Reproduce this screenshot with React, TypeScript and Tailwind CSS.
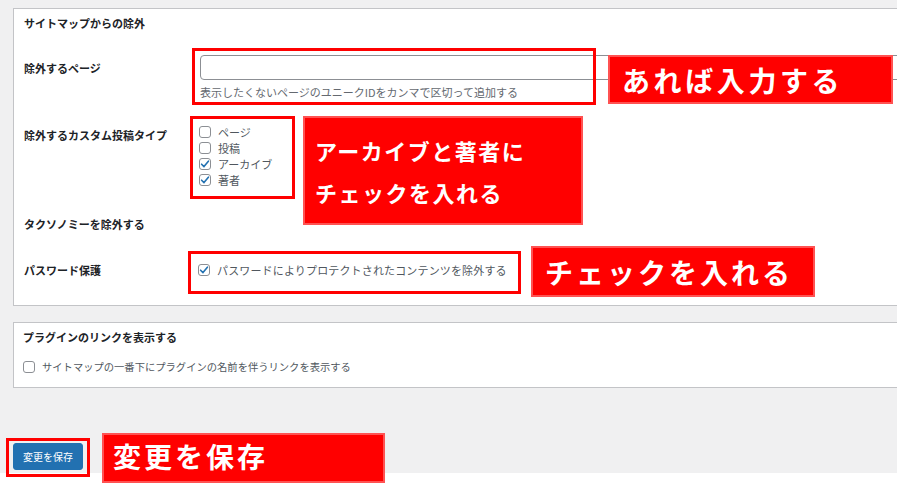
import React from "react";

function Box({ checked = false }: { checked?: boolean }) {
  return (
    <span className="w-[12px] h-[12px] shrink-0 border border-[#8c8f94] rounded-[3px] bg-white flex items-center justify-center">
      {checked && (
        <svg width="10" height="10" viewBox="0 0 10 10">
          <path d="M1.6 5.2 L4 7.6 L8.4 2.2" fill="none" stroke="#2271b1" strokeWidth="1.6" strokeLinecap="round" strokeLinejoin="round" />
        </svg>
      )}
    </span>
  );
}

function Check({ label, checked = false, cls = "text-[11px]" }: { label: string; checked?: boolean; cls?: string }) {
  return (
    <label className="flex items-center h-[16px] gap-[7px]">
      <Box checked={checked} />
      <span className={`leading-[16px] text-[#50575e] whitespace-nowrap ${cls}`}>{label}</span>
    </label>
  );
}

export default function App() {
  return (
    <div className="w-[897px] h-[488px] relative overflow-hidden bg-white font-['Noto_Sans_CJK_JP',sans-serif] text-[#1d2327]">
      <div className="h-[473px] bg-[#f0f0f1] pt-[8px] pl-[13px] flex flex-col">
        {/* Panel 1 */}
        <section className="h-[298px] w-[900px] bg-white border border-r-0 border-[#c3c4c7] flex flex-col pl-[10px]">
          <div className="h-[29px] flex items-center text-[11px] font-bold">サイトマップからの除外</div>
          {/* row 1 */}
          <div className="grid grid-cols-[175px_1fr]">
            <div className="pt-[22px] text-[11px] leading-[16px] font-bold">除外するページ</div>
            <div className="pt-[17px] pl-[1px]">
              <div className="h-[25px] w-[800px] border border-[#8c8f94] rounded-[4px] bg-white" />
              <div className="mt-[4px] text-[11px] leading-[16px] text-[#646970] whitespace-nowrap">
                表示したくないページのユニークIDをカンマで区切って追加する
              </div>
            </div>
          </div>
          {/* row 2 */}
          <div className="grid grid-cols-[175px_1fr]">
            <div className="pt-[27px] text-[11px] leading-[16px] font-bold">除外するカスタム投稿タイプ</div>
            <div className="pt-[24px] flex flex-col">
              <Check label="ページ" />
              <Check label="投稿" />
              <Check label="アーカイブ" checked />
              <Check label="著者" checked />
            </div>
          </div>
          {/* row 3 */}
          <div className="mt-[28px] text-[11px] leading-[16px] font-bold">タクソノミーを除外する</div>
          {/* row 4 */}
          <div className="mt-[30px] grid grid-cols-[174px_1fr] items-center">
            <div className="text-[11px] leading-[16px] font-bold">パスワード保護</div>
            <Check label="パスワードによりプロテクトされたコンテンツを除外する" checked cls="text-[11px] tracking-[0.15px]" />
          </div>
        </section>

        {/* Panel 2 */}
        <section className="mt-[16px] h-[66px] w-[900px] bg-white border border-r-0 border-[#c3c4c7] flex flex-col pl-[9px]">
          <div className="h-[29px] flex items-center text-[11px] font-bold">プラグインのリンクを表示する</div>
          <div className="mt-[7px]">
            <Check label="サイトマップの一番下にプラグインの名前を伴うリンクを表示する" cls="text-[10.3px]" />
          </div>
        </section>

        <div className="mt-[55px]">
          <button className="h-[27px] w-[70px] rounded-[3px] bg-[#2271b1] border border-[#2271b1] text-white text-[10px] leading-none flex items-center justify-center">
            変更を保存
          </button>
        </div>
      </div>

      {/* Annotation outlines */}
      <div className="absolute left-[192px] top-[48px] w-[404px] h-[57px] border-[3px] border-[#ff0000]" />
      <div className="absolute left-[190px] top-[116px] w-[105px] h-[83px] border-[3px] border-[#ff0000]" />
      <div className="absolute left-[188px] top-[251px] w-[333px] h-[43px] border-[3px] border-[#ff0000]" />
      <div className="absolute left-[6px] top-[438px] w-[84px] h-[39px] border-[3px] border-[#ff0000]" />

      {/* Callouts */}
      <div className="absolute left-[608px] top-[55px] w-[285px] h-[49px] bg-[#ff0000] border-2 border-[#ff5252] flex items-center pl-[12px] text-white font-bold text-[28px] tracking-[3.6px] leading-none whitespace-nowrap">
        あれば入力する
      </div>
      <div className="absolute left-[303px] top-[116px] w-[280px] h-[109px] bg-[#ff0000] border-2 border-[#ff5252] flex flex-col justify-center pl-[10px] text-white font-bold text-[22px] tracking-[1.5px] leading-[42px] whitespace-nowrap">
        <div>アーカイブと著者に</div>
        <div>チェックを入れる</div>
      </div>
      <div className="absolute left-[531px] top-[246px] w-[284px] h-[51px] bg-[#ff0000] border-2 border-[#ff5252] flex items-center pl-[12px] text-white font-bold text-[28px] tracking-[3px] leading-none whitespace-nowrap">
        チェックを入れる
      </div>
      <div className="absolute left-[102px] top-[433px] w-[283px] h-[50px] bg-[#ff0000] border-2 border-[#ff5252] flex items-center pl-[9px] pb-[4px] text-white font-bold text-[28px] tracking-[3px] leading-none whitespace-nowrap">
        変更を保存
      </div>
    </div>
  );
}
